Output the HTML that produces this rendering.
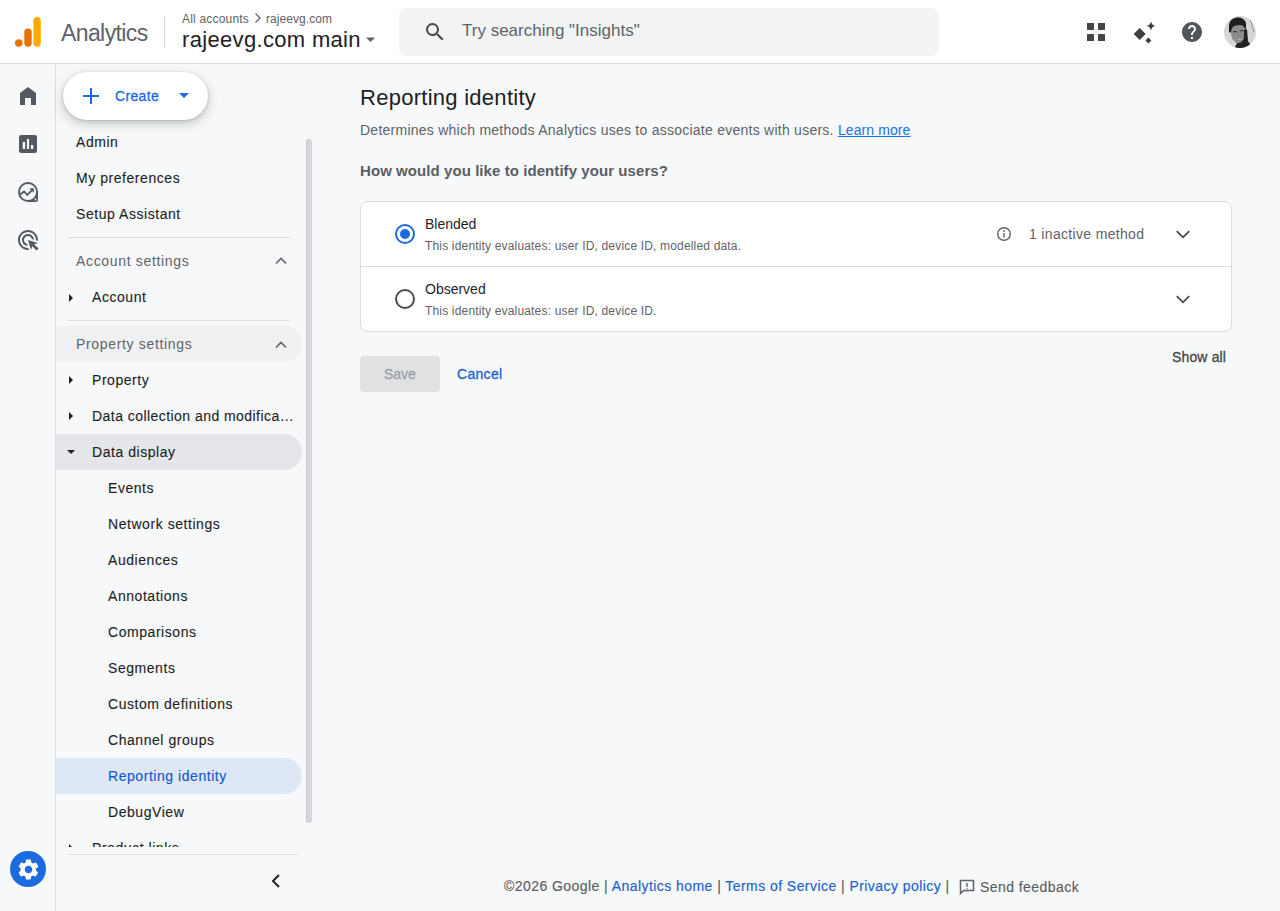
<!DOCTYPE html>
<html><head><meta charset="utf-8">
<style>
*{box-sizing:border-box;margin:0;padding:0}
html,body{width:1280px;height:911px;overflow:hidden}
body{font-family:"Liberation Sans",sans-serif;background:#f6f8fa;color:#202124;position:relative}
.abs{position:absolute}
.t{position:absolute;white-space:nowrap;line-height:1}
#hdr{position:absolute;left:0;top:0;width:1280px;height:64px;background:#fff;border-bottom:1px solid #dadce0}
#rail{position:absolute;left:0;top:64px;width:56px;height:847px;border-right:1px solid #dadce0}
.nav{margin-top:-1px;font-size:14px;color:#1f1f1f;letter-spacing:.55px;-webkit-text-stroke:.12px currentColor}
.sec{font-size:14px;color:#5f6368;letter-spacing:.67px}
.hl{position:absolute;left:56px;width:246px;height:36px;border-radius:0 18px 18px 0}
.divd{position:absolute;left:68px;width:222px;height:1px;background:#dadce0}
.tri{position:absolute;width:0;height:0}
.foot{font-size:14px;color:#5a5e63;letter-spacing:.44px;-webkit-text-stroke:.15px currentColor}
.med{-webkit-text-stroke:.3px currentColor}
.foot a{color:#1c5ecf;text-decoration:none}
</style></head><body>
<div id="hdr">
  <svg class="abs" style="left:14px;top:16px" width="30" height="32" viewBox="0 0 30 32">
    <circle cx="4.800" cy="27" r="3.800" fill="#e8710a"/>
    <rect x="10.300" y="12.400" width="7.400" height="18.400" rx="3.700" fill="#e8710a"/>
    <rect x="19.400" y="1.100" width="7.400" height="29.700" rx="3.700" fill="#f9ab00"/>
  </svg>
  <div class="t" style="left:61px;top:22px;font-size:23px;letter-spacing:-.6px;color:#5f6368">Analytics</div>
  <div class="abs" style="left:164px;top:16px;width:1px;height:32px;background:#dadce0"></div>
  <div class="t" style="left:182px;top:13px;font-size:12px;letter-spacing:.19px;color:#5f6368">All accounts</div>
  <svg class="abs" style="left:252px;top:12px" width="12" height="12" viewBox="0 0 12 12"><path d="M3.500 1.500l4.500 4.500-4.500 4.500" stroke="#5f6368" stroke-width="1.300" fill="none"/></svg>
  <div class="t" style="left:266px;top:13px;font-size:12px;letter-spacing:.06px;color:#5f6368">rajeevg.com</div>
  <div class="t" style="left:182px;top:29px;font-size:22px;letter-spacing:.33px;color:#202124">rajeevg.com main</div>
  <svg class="abs" style="left:365px;top:37px" width="12" height="6"><path d="M1 .5h9L5.500 5z" fill="#5f6368"/></svg>
  <div class="abs" style="left:399px;top:8px;width:540px;height:48px;border-radius:8px;background:#f1f3f4"></div>
  <svg class="abs" style="left:423px;top:20px" width="24" height="24" viewBox="0 0 24 24"><path fill="#444746" d="M15.5 14h-.79l-.28-.27A6.471 6.471 0 0 0 16 9.5 6.5 6.5 0 1 0 9.5 16c1.610 0 3.090-.59 4.230-1.570l.27.28v.79l5 4.990L20.490 19l-4.990-5zm-6 0C7.010 14 5 11.990 5 9.500S7.010 5 9.500 5 14 7.010 14 9.500 11.990 14 9.500 14z"/></svg>
  <div class="t" style="left:462px;top:22px;font-size:17px;color:#5f6368">Try searching "Insights"</div>
  <!-- apps -->
  <svg class="abs" style="left:1084px;top:20px" width="24" height="24" viewBox="0 0 24 24"><path fill="#444746" d="M3 3h7v7H3zM14 3h7v7h-7zM3 14h7v7H3zM14 14h7v7h-7z"/></svg>
  <!-- sparkle -->
  <svg class="abs" style="left:1132px;top:20px" width="24" height="24" viewBox="0 0 24 24"><path fill="#3c4043" d="M1.700 14L7.700 8l6 6-6 6zM13.400 20.600l3-3 3 3-3 3zM14.600 5.900Q18.100 5.400 19 1.500Q19.900 5.400 23.400 5.900Q19.900 6.400 19 10.300Q18.100 6.400 14.600 5.900z"/></svg>
  <!-- help -->
  <svg class="abs" style="left:1180px;top:20px" width="24" height="24" viewBox="0 0 24 24"><path fill="#52565b" d="M12 2C6.48 2 2 6.48 2 12s4.48 10 10 10 10-4.48 10-10S17.52 2 12 2zm1 17h-2v-2h2v2zm2.070-7.750l-.9.920C13.450 12.900 13 13.500 13 15h-2v-.5c0-1.100.45-2.100 1.170-2.830l1.240-1.260c.37-.36.59-.86.59-1.410 0-1.100-.9-2-2-2s-2 .9-2 2H8c0-2.210 1.790-4 4-4s4 1.790 4 4c0 .88-.36 1.680-.93 2.250z"/></svg>
  <!-- avatar -->
  <svg class="abs" style="left:1224px;top:16px" width="32" height="32" viewBox="0 0 32 32">
    <defs><clipPath id="av"><circle cx="16" cy="16" r="16"/></clipPath></defs>
    <g clip-path="url(#av)">
      <rect width="32" height="32" fill="#d6d6d6"/>
      <path d="M24 0l8 18v-18z" fill="#e6e6e6"/>
      <path d="M26 2l4 14" stroke="#8a8a8a" stroke-width="1"/>
      <path d="M5 9c1-6 6-8 10-7.500s7 3 7 7v5l-2 2-15 1z" fill="#1c1c1c"/>
      <ellipse cx="15" cy="18" rx="8" ry="10" transform="rotate(-12 15 18)" fill="#8c8c8c"/>
      <path d="M6 6c3-4 10-4 14-1l1 5c-4-2-10-1-15 2z" fill="#1f1f1f"/>
      <path d="M20 14l3-1 1 12 4 6-4 2h-14l3-6c3 1 6-2 7-5z" fill="#222"/>
      <path d="M12 22q4 3 7 0q-3 4-7 0z" fill="#f0f0f0"/>
      <path d="M9 16q2-1 4 0M16 15q2-1 4 0" stroke="#333" stroke-width="1.200" fill="none"/>
    </g>
  </svg>
</div>

<div id="rail">
  <svg class="abs" style="left:16px;top:20px" width="24" height="24" viewBox="0 0 24 24"><path fill="#545a60" d="M4 21V9l8-6 8 6v12h-5v-7h-6v7z"/></svg>
  <svg class="abs" style="left:16px;top:68px" width="24" height="24" viewBox="0 0 24 24"><path fill="#545a60" fill-rule="evenodd" d="M5 3h14a2 2 0 0 1 2 2v14a2 2 0 0 1-2 2H5a2 2 0 0 1-2-2V5a2 2 0 0 1 2-2zM6.700 10v7h2.400v-7zM10.900 7v10h2.200V7zM14.900 13v4h2.300v-4z"/></svg>
  <svg class="abs" style="left:16px;top:116px" width="24" height="24" viewBox="0 0 24 24"><path fill="#545a60" fill-rule="evenodd" d="M12 2a10 10 0 1 0 0 20h8a2 2 0 0 0 2-2v-8A10 10 0 0 0 12 2zM12 3.900a8.100 8.100 0 1 1 0 16.200 8.100 8.100 0 0 1 0-16.200zM19.500 18.600a.9.9 0 1 0 0 1.800.9.9 0 0 0 0-1.800z"/><path d="M4.100 14.500l4-3.100 3.200 3.600 5.300-5.400" fill="none" stroke="#545a60" stroke-width="1.850"/><path fill="#545a60" d="M13.300 8.200h4.500v4.500z"/></svg>
  <svg class="abs" style="left:16px;top:164px" width="24" height="24" viewBox="0 0 24 24"><path fill="#545a60" d="M11.710 17.990A5.993 5.993 0 0 1 6 12c0-3.310 2.690-6 6-6 3.220 0 5.840 2.530 5.990 5.710l-2.100-.63C15.480 9.310 13.890 8 12 8c-2.210 0-4 1.790-4 4 0 1.890 1.310 3.480 3.080 3.890l.63 2.100zM22 12c0 .3-.01.6-.04.9l-1.970-.59c.01-.1.01-.21.01-.31 0-4.420-3.580-8-8-8s-8 3.580-8 8 3.580 8 8 8c.1 0 .21 0 .31-.01l.59 1.970c-.3.03-.6.04-.9.04-5.520 0-10-4.480-10-10S6.480 2 12 2s10 4.480 10 10zm-3.770 4.260L22 15l-10-3 3 10 1.260-3.770 4.270 4.270 1.980-1.980-4.280-4.260z"/></svg>
  <!-- gear -->
  <div class="abs" style="left:10px;top:787px;width:36px;height:36px;border-radius:50%;background:#1b6ae0"></div>
  <svg class="abs" style="left:15.500px;top:792.500px" width="25" height="25" viewBox="0 0 24 24"><path fill="#fff" d="M19.140 12.940c.04-.3.06-.61.06-.94 0-.32-.02-.64-.07-.94l2.030-1.580a.49.49 0 0 0 .12-.61l-1.920-3.320a.488.488 0 0 0-.59-.22l-2.390.96c-.5-.38-1.030-.7-1.620-.94l-.36-2.540a.484.484 0 0 0-.48-.41h-3.840c-.24 0-.43.17-.47.41l-.36 2.540c-.59.24-1.130.57-1.620.94l-2.390-.96a.477.477 0 0 0-.59.22L2.740 8.870c-.12.21-.8.47.12.61l2.030 1.580c-.5.3-.9.62-.9.940s.2.640.7.940l-2.030 1.580a.49.49 0 0 0-.12.61l1.920 3.320c.12.22.37.29.59.22l2.390-.96c.5.38 1.030.7 1.620.94l.36 2.540c.5.24.24.41.48.41h3.840c.24 0 .44-.17.47-.41l.36-2.540c.59-.24 1.130-.56 1.620-.94l2.390.96c.22.08.47 0 .59-.22l1.920-3.320c.12-.22.07-.47-.12-.61l-2.010-1.580zM12 15.600c-1.980 0-3.600-1.620-3.600-3.600s1.620-3.600 3.600-3.600 3.600 1.620 3.600 3.600-1.620 3.600-3.600 3.600z"/></svg>
</div>

<!-- nav panel -->
<div class="abs" style="left:63px;top:72px;width:145px;height:48px;border-radius:24px;background:#fff;box-shadow:0 1px 3px rgba(60,64,67,.3),0 4px 8px 3px rgba(60,64,67,.15)"></div>
<svg class="abs" style="left:81px;top:86px" width="20" height="20" viewBox="0 0 20 20"><path d="M10 2v16M2 10h16" stroke="#1b69dc" stroke-width="2"/></svg>
<div class="t med" style="left:115px;top:89px;font-size:14px;letter-spacing:.35px;color:#1b69dc">Create</div>
<svg class="abs" style="left:179px;top:93px" width="10" height="6"><path d="M0 0h10L5 5z" fill="#1b69dc"/></svg>

<div class="t nav" style="left:76px;top:136px">Admin</div>
<div class="t nav" style="left:76px;top:172px">My preferences</div>
<div class="t nav" style="left:76px;top:208px">Setup Assistant</div>
<div class="divd" style="top:237px"></div>
<div class="t sec" style="left:76px;top:254px">Account settings</div>
<svg class="abs" style="left:275px;top:257px" width="12" height="8"><path d="M1 6.500l5-5 5 5" stroke="#5f6368" stroke-width="1.600" fill="none"/></svg>
<svg class="abs" style="left:69px;top:294px" width="6" height="8"><path d="M0 0l4 4-4 4z" fill="#202124"/></svg>
<div class="t nav" style="left:92px;top:291px">Account</div>
<div class="divd" style="top:320px"></div>
<div class="hl" style="top:326px;background:#eff0f2"></div>
<div class="t sec" style="left:76px;top:337px">Property settings</div>
<svg class="abs" style="left:275px;top:341px" width="12" height="8"><path d="M1 6.500l5-5 5 5" stroke="#5f6368" stroke-width="1.600" fill="none"/></svg>
<svg class="abs" style="left:69px;top:376px" width="6" height="8"><path d="M0 0l4 4-4 4z" fill="#202124"/></svg>
<div class="t nav" style="left:92px;top:374px">Property</div>
<svg class="abs" style="left:69px;top:412px" width="6" height="8"><path d="M0 0l4 4-4 4z" fill="#202124"/></svg>
<div class="t nav" style="left:92px;top:410px;letter-spacing:.45px">Data collection and modifica&hellip;</div>
<div class="hl" style="top:434px;background:#e4e6e9"></div>
<svg class="abs" style="left:67px;top:450px" width="10" height="6"><path d="M0 0h8L4 4z" fill="#202124"/></svg>
<div class="t nav" style="left:92px;top:446px">Data display</div>
<div class="t nav" style="left:108px;top:482px">Events</div>
<div class="t nav" style="left:108px;top:518px">Network settings</div>
<div class="t nav" style="left:108px;top:554px">Audiences</div>
<div class="t nav" style="left:108px;top:590px">Annotations</div>
<div class="t nav" style="left:108px;top:626px">Comparisons</div>
<div class="t nav" style="left:108px;top:662px">Segments</div>
<div class="t nav" style="left:108px;top:698px">Custom definitions</div>
<div class="t nav" style="left:108px;top:734px">Channel groups</div>
<div class="hl" style="top:758px;background:#dde7f6"></div>
<div class="t nav" style="left:108px;top:770px;color:#0b57d0">Reporting identity</div>
<div class="t nav" style="left:108px;top:806px">DebugView</div>
<div class="abs" style="left:56px;top:830px;width:250px;height:17px;overflow:hidden">
  <svg class="abs" style="left:13px;top:13.500px" width="6" height="8"><path d="M0 0l4 4-4 4z" fill="#202124"/></svg>
  <div class="t nav" style="left:36px;top:12px">Product links</div>
</div>
<div class="divd" style="top:854px;width:230px"></div>
<svg class="abs" style="left:266px;top:871px" width="20" height="20" viewBox="0 0 20 20"><path d="M13 4l-6 6 6 6" stroke="#202124" stroke-width="2" fill="none"/></svg>
<!-- scrollbar -->
<div class="abs" style="left:306px;top:139px;width:6px;height:684px;border-radius:3px;background:#d5d6d9;border-left:1px solid #c6c7ca"></div>

<!-- main -->
<div class="t" style="left:360px;top:87px;font-size:22px;letter-spacing:.27px;color:#202124">Reporting identity</div>
<div class="t" style="left:360px;top:123px;font-size:14px;letter-spacing:.25px;color:#5f6368">Determines which methods Analytics uses to associate events with users. <span style="color:#1a73e8;text-decoration:underline;letter-spacing:.1px;margin-left:0">Learn more</span></div>
<div class="t" style="left:360px;top:163px;font-size:15px;font-weight:bold;letter-spacing:.07px;color:#5a5e63">How would you like to identify your users?</div>

<div class="abs" style="left:360px;top:201px;width:872px;height:131px;border:1px solid #dadce0;border-radius:8px;background:#fff"></div>
<div class="abs" style="left:361px;top:266px;width:870px;height:1px;background:#dadce0"></div>
<div class="abs" style="left:395px;top:224px;width:20px;height:20px;border:2px solid #1b69dc;border-radius:50%"></div>
<div class="abs" style="left:400px;top:229px;width:10px;height:10px;background:#1b69dc;border-radius:50%"></div>
<div class="t" style="left:425px;top:217px;font-size:14px;color:#1f1f1f">Blended</div>
<div class="t" style="left:425px;top:240px;font-size:12px;letter-spacing:.17px;color:#5f6368">This identity evaluates: user ID, device ID, modelled data.</div>
<svg class="abs" style="left:996px;top:226px" width="16" height="16" viewBox="0 0 16 16"><circle cx="8" cy="8" r="6.300" stroke="#5f6368" stroke-width="1.400" fill="none"/><path d="M8 7v4.500" stroke="#5f6368" stroke-width="1.400"/><circle cx="8" cy="5" r=".9" fill="#5f6368"/></svg>
<div class="t" style="left:1029px;top:227px;font-size:14px;letter-spacing:.33px;color:#5f6368">1 inactive method</div>
<svg class="abs" style="left:1175px;top:229px" width="16" height="12"><path d="M1.800 2.200l6.200 6.200 6.200-6.200" stroke="#444746" stroke-width="1.700" fill="none"/></svg>

<div class="abs" style="left:395px;top:289px;width:20px;height:20px;border:2px solid #4a4d50;border-radius:50%"></div>
<div class="t" style="left:425px;top:282px;font-size:14px;color:#1f1f1f">Observed</div>
<div class="t" style="left:425px;top:305px;font-size:12px;letter-spacing:.17px;color:#5f6368">This identity evaluates: user ID, device ID.</div>
<svg class="abs" style="left:1175px;top:294px" width="16" height="12"><path d="M1.800 2.200l6.200 6.200 6.200-6.200" stroke="#444746" stroke-width="1.700" fill="none"/></svg>

<div class="t med" style="left:1172px;top:350px;font-size:14px;letter-spacing:.15px;color:#444746">Show all</div>
<div class="abs" style="left:360px;top:356px;width:80px;height:36px;border-radius:4px;background:#e0e1e3"></div>
<div class="t med" style="left:384px;top:367px;font-size:14px;color:#9aa0a6">Save</div>
<div class="t med" style="left:457px;top:367px;font-size:14px;letter-spacing:.3px;color:#1a62d2">Cancel</div>

<!-- footer -->
<div class="t foot" style="left:504px;top:879px">©2026 Google | <a>Analytics home</a> | <a>Terms of Service</a> | <a>Privacy policy</a> | </div>
<svg class="abs" style="left:958px;top:878px" width="18" height="18" viewBox="0 0 18 18"><path d="M2.500 2.500h13v10h-10l-3 3z" stroke="#5f6368" stroke-width="1.500" fill="none"/><path d="M9 5v4M9 10.200v1" stroke="#5f6368" stroke-width="1.400"/></svg>
<div class="t foot" style="left:980px;top:880px">Send feedback</div>
</body></html>
